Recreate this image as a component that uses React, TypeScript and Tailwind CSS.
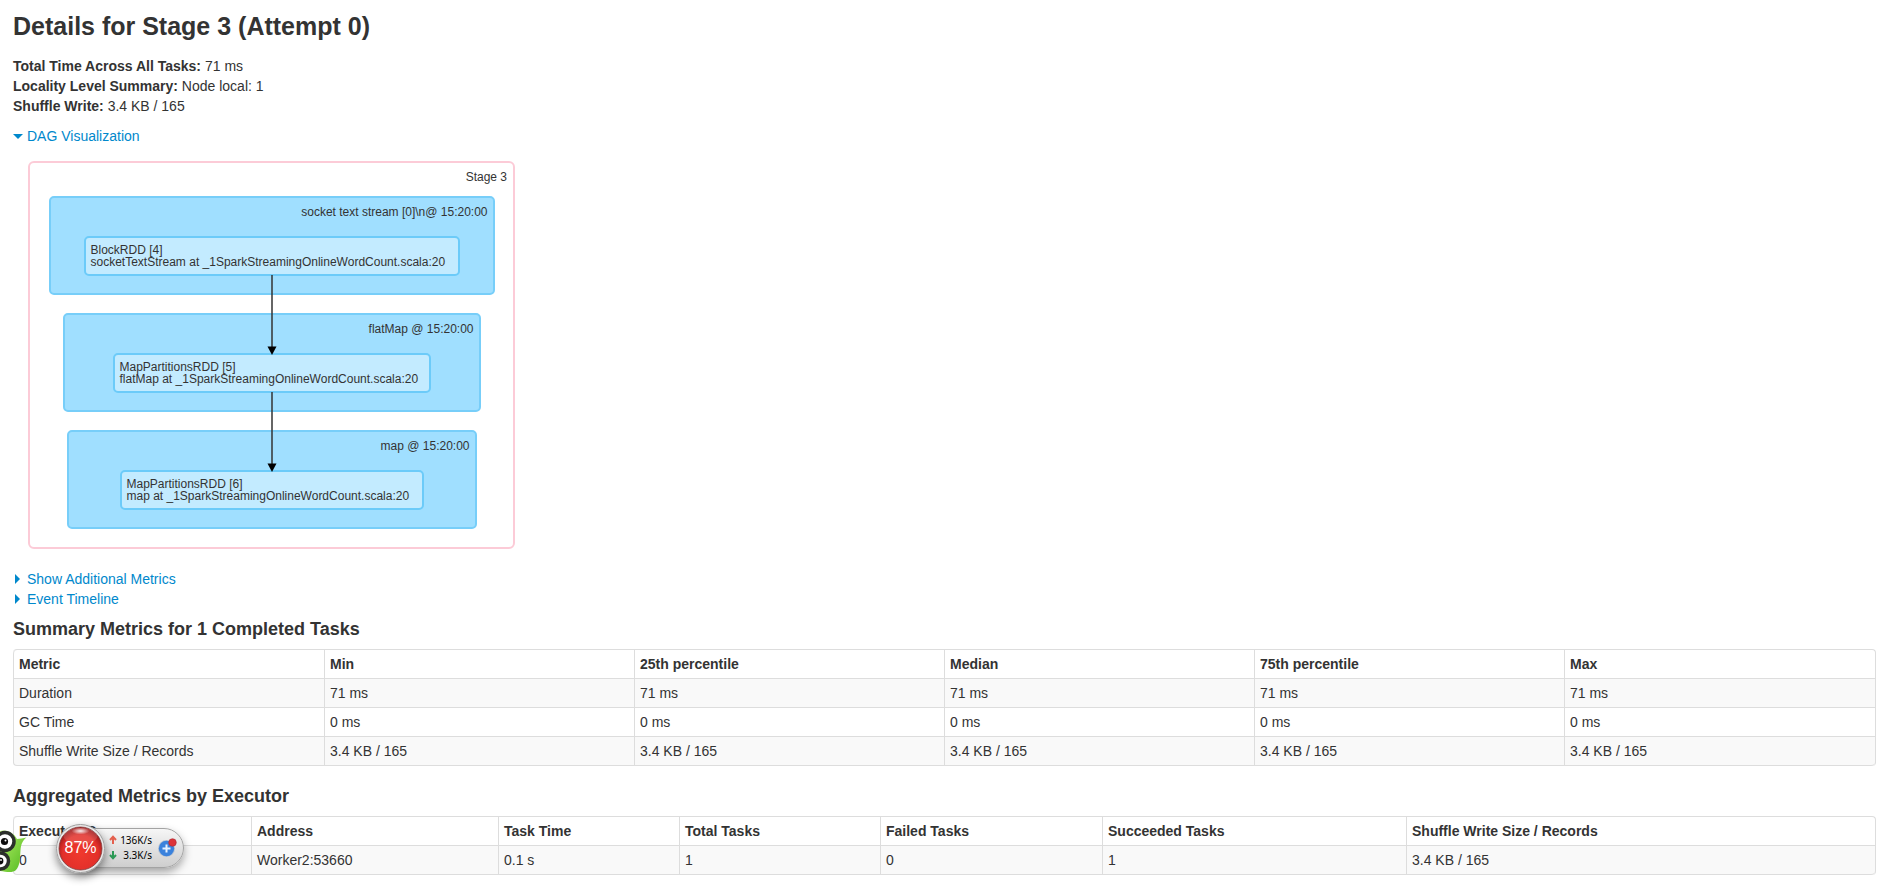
import React from "react";

type Operation = { name: string; box: string; node: string; rdd: string; callSite: string };

const operations: Operation[] = [
  { name: "socket text stream [0]\\n@ 15:20:00", box: "w-[446px]", node: "w-[376px]", rdd: "BlockRDD [4]", callSite: "socketTextStream at _1SparkStreamingOnlineWordCount.scala:20" },
  { name: "flatMap @ 15:20:00", box: "w-[418px]", node: "w-[318px]", rdd: "MapPartitionsRDD [5]", callSite: "flatMap at _1SparkStreamingOnlineWordCount.scala:20" },
  { name: "map @ 15:20:00", box: "w-[410px]", node: "w-[304px]", rdd: "MapPartitionsRDD [6]", callSite: "map at _1SparkStreamingOnlineWordCount.scala:20" },
];

const summaryHead = ["Metric", "Min", "25th percentile", "Median", "75th percentile", "Max"];
const summaryRows = [
  ["Duration", "71 ms", "71 ms", "71 ms", "71 ms", "71 ms"],
  ["GC Time", "0 ms", "0 ms", "0 ms", "0 ms", "0 ms"],
  ["Shuffle Write Size / Records", "3.4 KB / 165", "3.4 KB / 165", "3.4 KB / 165", "3.4 KB / 165", "3.4 KB / 165"],
];
const summaryWidths = ["w-[311px]", "w-[310px]", "w-[310px]", "w-[310px]", "w-[310px]", ""];

const executorHead = ["Executor ID", "Address", "Task Time", "Total Tasks", "Failed Tasks", "Succeeded Tasks", "Shuffle Write Size / Records"];
const executorRows = [["0", "Worker2:53660", "0.1 s", "1", "0", "1", "3.4 KB / 165"]];
const executorWidths = ["w-[238px]", "w-[247px]", "w-[181px]", "w-[201px]", "w-[222px]", "w-[304px]", ""];

function Toggle({ label, open = false }: { label: string; open?: boolean }) {
  return (
    <a href="#" className="flex w-fit items-center text-[#0088cc]">
      <svg className="mr-1 h-[10px] w-[10px]" viewBox="0 0 10 10" fill="#0088cc" aria-hidden="true">
        {open ? <path d="M0 3h10L5 8z" /> : <path d="M2 0v10l5-5z" />}
      </svg>
      {label}
    </a>
  );
}

function Arrow() {
  return (
    <svg className="absolute top-full left-1/2 z-10 h-[81px] w-[10px] -translate-x-1/2" viewBox="0 0 10 81" aria-hidden="true">
      <path d="M5 1v73" stroke="#333" strokeWidth="1.5" />
      <path d="M0.5 72.5h9L5 81z" fill="#000" />
    </svg>
  );
}

function Dag() {
  return (
    <div className="ml-[15px] flex w-[487px] flex-col items-center gap-[18px] rounded-[6px] border-2 border-[#fccbd7] pb-[18px] text-xs leading-3 text-[#333]">
      <div className="-mb-[5px] self-end pt-2 pr-[6px]">Stage 3</div>
      {operations.map((op, i) => (
        <div key={op.name} className={`flex flex-col items-center rounded-[5px] border-2 border-[#77cef9] bg-[#a0dfff] pb-[17px] ${op.box}`}>
          <div className="self-end pt-2 pr-[5px] pb-[18px]">{op.name}</div>
          <div className={`relative rounded-[5px] border-2 border-[#6ccbf9] bg-[#c3ebff] py-[6px] pl-[5px] whitespace-nowrap ${op.node}`}>
            <div>{op.rdd}</div>
            <div>{op.callSite}</div>
            {i < operations.length - 1 && <Arrow />}
          </div>
        </div>
      ))}
    </div>
  );
}

function MetricsTable({ head, rows, widths }: { head: string[]; rows: string[][]; widths: string[] }) {
  return (
    <table className="w-full table-fixed border-separate border-spacing-0 rounded-[4px] border-t border-r border-[#ddd] text-left">
      <thead>
        <tr>
          {head.map((h, i) => (
            <th key={h} className={`border-b border-l border-[#ddd] px-[5px] py-1 font-bold first:rounded-tl-[4px] ${widths[i]}`}>{h}</th>
          ))}
        </tr>
      </thead>
      <tbody>
        {rows.map((row) => (
          <tr key={row[0]} className="group odd:bg-[#f9f9f9]">
            {row.map((cell, i) => (
              <td key={i} className="border-b border-l border-[#ddd] px-[5px] py-1 group-last:first:rounded-bl-[4px] group-last:last:rounded-br-[4px]">{cell}</td>
            ))}
          </tr>
        ))}
      </tbody>
    </table>
  );
}

function Mascot() {
  return (
    <svg className="absolute top-[828px] left-0 h-[46px] w-[28px]" viewBox="0 0 28 46" aria-hidden="true">
      <defs>
        <linearGradient id="skin" x1="0" y1="0" x2="1" y2="1">
          <stop offset="0" stopColor="#b6f06a" />
          <stop offset="1" stopColor="#4fb81c" />
        </linearGradient>
      </defs>
      <path d="M0 3C7 1 14 5 17 11c3 0 6-1 9.500-1.500C22 13 21 17 20.500 22c-.5 8-.5 16-4.500 20-3 3-9 2-16 1z" fill="url(#skin)" />
      <circle cx="5" cy="13.500" r="9" fill="#fff" stroke="#2b2f2b" strokeWidth="3.500" />
      <circle cx="4.500" cy="13.500" r="3.600" fill="#0c0c0c" />
      <circle cx="5.500" cy="12.500" r="1" fill="#fff" />
      <circle cx="0.500" cy="33" r="8" fill="#fff" stroke="#2b2f2b" strokeWidth="3.500" />
      <circle cx="0" cy="33" r="3.400" fill="#0c0c0c" />
      <circle cx="1" cy="32" r="0.900" fill="#fff" />
    </svg>
  );
}

function SpeedWidget() {
  return (
    <div className="absolute top-[823px] left-[56px] flex h-[50px] w-[128px] items-center">
      <div className="ml-6 flex h-10 flex-1 items-center rounded-r-full border border-[#a3a3a3] bg-linear-to-b from-[#f6f6f6] to-[#cecece] pr-[6px] pl-7 shadow-[0_4px_8px_rgba(0,0,0,0.35)]">
        <svg className="h-[26px] w-[8px] shrink-0" viewBox="0 0 8 26" fill="none" strokeWidth="2" aria-hidden="true">
          <path d="M4 9V2M1 5l3-3.200L7 5" stroke="#e4604e" />
          <path d="M4 16v7M1 20l3 3.200L7 20" stroke="#2b9a56" />
        </svg>
        <div className="flex-1 pr-[6px] text-right font-['Noto_Sans','Open_Sans',sans-serif] text-[10px] leading-[15px] whitespace-nowrap text-black">
          <div>136K/s</div>
          <div>3.3K/s</div>
        </div>
        <svg className="h-[20px] w-[19px] shrink-0" viewBox="0 0 19 20" aria-hidden="true">
          <circle cx="8.500" cy="10.500" r="8.500" fill="#b9c3d0" />
          <circle cx="8.500" cy="10.500" r="7.700" fill="#3b82dc" />
          <path d="M8.500 6.500v8M4.500 10.500h8" stroke="#e6f1ff" strokeWidth="2" />
          <circle cx="14.500" cy="4.500" r="3.800" fill="#dd3338" stroke="#a92a35" strokeWidth="0.600" />
        </svg>
      </div>
      <div className="absolute left-0 flex size-[49px] items-center justify-center rounded-full shadow-[0_4px_8px_rgba(0,0,0,0.45)]">
        <svg className="absolute inset-0 size-full" viewBox="0 0 49 49" aria-hidden="true">
          <defs>
            <radialGradient id="orb" cx="0.5" cy="0.6" r="0.55">
              <stop offset="0" stopColor="#f0392d" />
              <stop offset="0.75" stopColor="#e3302a" />
              <stop offset="1" stopColor="#a81c1c" />
            </radialGradient>
            <radialGradient id="shine">
              <stop offset="0" stopColor="#fff" stopOpacity="0.9" />
              <stop offset="1" stopColor="#fff" stopOpacity="0" />
            </radialGradient>
          </defs>
          <circle cx="24.500" cy="24.500" r="24" fill="#e9e9e9" stroke="#9c9c9c" />
          <circle cx="24.500" cy="24.500" r="21.500" fill="url(#orb)" stroke="#7f3a3a" strokeWidth="0.800" />
          <ellipse cx="24.500" cy="12" rx="17" ry="8" fill="#fff" opacity="0.14" />
          <ellipse cx="24.500" cy="7" rx="9" ry="3.500" fill="url(#shine)" />
        </svg>
        <span className="relative text-base leading-5 text-white">87%</span>
      </div>
    </div>
  );
}

export default function App() {
  return (
    <div className="relative min-h-screen overflow-hidden bg-white pt-[6px] pr-[14px] pb-[14px] pl-[13px] font-['Liberation_Sans',Arial,sans-serif] text-sm leading-5 text-[#333]">
      <h3 className="text-[25px] leading-10 font-bold">Details for Stage 3 (Attempt 0)</h3>
      <ul className="mt-[10px]">
        <li><strong>Total Time Across All Tasks:</strong> 71 ms</li>
        <li><strong>Locality Level Summary:</strong> Node local: 1</li>
        <li><strong>Shuffle Write:</strong> 3.4 KB / 165</li>
      </ul>
      <div className="mt-[10px] mb-[15px]"><Toggle label="DAG Visualization" open /></div>
      <Dag />
      <div className="mt-5">
        <Toggle label="Show Additional Metrics" />
        <Toggle label="Event Timeline" />
      </div>
      <h4 className="my-[10px] text-lg leading-5 font-bold">Summary Metrics for 1 Completed Tasks</h4>
      <MetricsTable head={summaryHead} rows={summaryRows} widths={summaryWidths} />
      <h4 className="mt-5 mb-[10px] text-lg leading-5 font-bold">Aggregated Metrics by Executor</h4>
      <MetricsTable head={executorHead} rows={executorRows} widths={executorWidths} />
      <Mascot />
      <SpeedWidget />
    </div>
  );
}
